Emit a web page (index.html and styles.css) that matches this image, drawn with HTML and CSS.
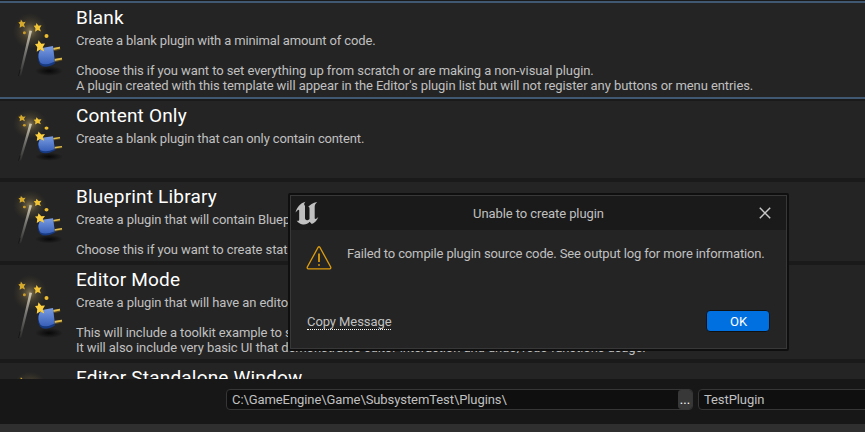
FILE: index.html
```html
<!DOCTYPE html>
<html lang="en">
<head>
<meta charset="utf-8">
<title>Plugins</title>
<link rel="stylesheet" href="styles.css">
</head>
<body>
<svg class="defs" aria-hidden="true">
  <defs>
    <radialGradient id="glow"><stop offset="0" stop-color="#d2b878" stop-opacity=".55"/><stop offset=".45" stop-color="#8a7748" stop-opacity=".28"/><stop offset="1" stop-color="#6a5a30" stop-opacity="0"/></radialGradient>
    <radialGradient id="shade"><stop offset="0" stop-color="#080808"/><stop offset="1" stop-color="#080808" stop-opacity="0"/></radialGradient>
    <linearGradient id="stick" x1="0" y1="0" x2="0" y2="1"><stop offset="0" stop-color="#d4ccb3"/><stop offset=".45" stop-color="#777672"/><stop offset="1" stop-color="#2c2c2c"/></linearGradient>
    <linearGradient id="body" x1="0" y1="0" x2="0" y2="1"><stop offset="0" stop-color="#7a9ce2"/><stop offset="1" stop-color="#3860b8"/></linearGradient>
    <path id="star" d="M-.3-1 .25-.38 1-.45.55.2.85.95.05.6-.65 1-.55.2-1-.35-.45-.4Z"/>
    <symbol id="plugin" viewBox="0 0 70 94" preserveAspectRatio="none">
      <ellipse cx="30" cy="28" rx="17" ry="18" fill="url(#glow)"/>
      <ellipse cx="49" cy="68" rx="14" ry="5" fill="url(#shade)"/>
      <path d="M29.5 27.5 32 28 21.2 72.3 18.8 73Z" fill="url(#stick)"/>
      <path d="M18.6 73 20.2 66.5" stroke="#111" stroke-width=".8"/>
      <use href="#star" transform="translate(22 20.7) scale(3.6 4.1)" fill="#d5a92c"/>
      <use href="#star" transform="translate(37.6 24.3) scale(3.9 4.4)" fill="#f0c235"/>
      <circle cx="24.4" cy="29.7" r="1.5" fill="#c99a27"/>
      <circle cx="46.5" cy="33" r="2" fill="#edbd30"/>
      <path d="M53 46.7 60 45.2M54 57.7 62 56" stroke="#5c4a1c" stroke-width="3"/>
      <path d="M53 46 60 44.7M54 57 62 55.7" stroke="#e0bd4e" stroke-width="1.8"/>
      <path d="M42 45.5 53 43.5 55 60.5Q45 66.5 40 61.5 36 54 39.5 48Z" fill="#17397f"/>
      <path d="M42 45 53 43 54.8 58.5Q46 63 40.5 60 37 54 39.5 48Z" fill="url(#body)"/>
      <use href="#star" transform="translate(40 43) scale(5 5.8)" fill="#fccf40"/>
    </symbol>
  </defs>
</svg>

<main class="templates">
  <section class="row selected">
    <svg class="icon"><use href="#plugin"/></svg>
    <div class="copy"><h2>Blank</h2><p><span class="tight">Create a blank plugin with a minimal amount of code.</span><br><br>Choose this if you want to set everything up from scratch or are making a non-visual plugin.<br>A plugin created with this template will appear in the Editor's plugin list but will not register any buttons or menu entries.</p></div>
  </section>
  <section class="row content-only">
    <svg class="icon"><use href="#plugin"/></svg>
    <div class="copy"><h2>Content Only</h2><p><span class="tight">Create a blank plugin that can only contain content.</span></p></div>
  </section>
  <section class="row library">
    <svg class="icon"><use href="#plugin"/></svg>
    <div class="copy"><h2>Blueprint Library</h2><p>Create a plugin that will contain Blueprint<br><br>Choose this if you want to create static</p></div>
  </section>
  <section class="row mode">
    <svg class="icon"><use href="#plugin"/></svg>
    <div class="copy"><h2>Editor Mode</h2><p>Create a plugin that will have an editor<br><br>This will include a toolkit example to s<br>It will also include very basic UI that demonstrates editor interaction and undo/redo functions usage.</p></div>
  </section>
  <section class="row standalone">
    <svg class="icon"><use href="#plugin"/></svg>
    <div class="copy"><h2>Editor Standalone Window</h2></div>
  </section>
</main>

<footer class="location">
  <div class="field path"><span>C:\GameEngine\Game\SubsystemTest\Plugins\</span><button class="browse">...</button></div>
  <div class="field name"><span>TestPlugin</span></div>
</footer>

<div class="dialog" role="dialog">
  <header class="titlebar">
    <svg class="logo" viewBox="0 0 24 24"><path fill="#c0c0c0" d="M.5 11.5C2 6.5 5 2.2 10.4.8 8.8 2.5 8.9 4 10 4.8V17.1C10 18.7 11.2 19.4 12.4 19.2 13.4 19 14.1 18.5 14.5 18V7.7C14.5 6.2 13.9 5.7 12.9 6.3 15 3.6 17.7 2 22.2 1 20.4 2.6 19.7 3.9 19.7 5.6V17C19.7 18.6 21.2 18.3 23.3 16.1 22 19.8 19.6 22.2 16.8 23L14.6 20.7C12.8 22.8 10.7 23.7 7.8 23.4 5 23.1 2.8 21.8 1.7 19.6 3.4 20.3 4.2 19.8 4.2 18.3V9.7C4.2 7.7 2.6 8.7.5 11.5Z"/></svg>
    <span class="caption">Unable to create plugin</span>
    <svg class="close" viewBox="0 0 12 12"><path d="M.8.8 11.2 11.2M11.2.8.8 11.2"/></svg>
  </header>
  <div class="message">
    <svg class="warning" viewBox="0 0 26 24"><path d="M12.2 1.2Q13 .4 13.8 1.2L24.8 21.2Q25 22.6 23.8 22.8H2.2Q1 22.6 1.2 21.2Z"/><path d="M13 7.5V16M13 18.2V19.8" stroke-width="1.8"/></svg>
    <span>Failed to compile plugin source code. See output log for more information.</span>
  </div>
  <div class="actions"><a class="copy-link">Copy Message</a><button class="ok">OK</button></div>
</div>
</body>
</html>
```
FILE: styles.css
```css
* { box-sizing: border-box; }
body {
  margin: 0;
  width: 865px;
  height: 432px;
  overflow: hidden;
  background: #2f2f2f;
  color: #c0c0c0;
  font: 13px/15px Roboto, sans-serif;
  letter-spacing: -.08px;
}
.defs { position: absolute; width: 0; height: 0; }

.templates {
  display: flex;
  flex-direction: column;
  gap: 4px;
  height: 379px;
  padding-top: 1px;
  overflow: hidden;
  background: #1a1a1a;
}
.row {
  display: flex;
  flex: none;
  gap: 6px;
  background: #242424;
  white-space: nowrap;
}
.selected {
  height: 98px;
  margin-bottom: -2px;
  border: solid #415872;
  border-width: 2px 0;
}
.content-only { height: 77px; }
.library { height: 79px; }
.mode { height: 94px; }
.standalone { height: 81px; }
.icon { width: 70px; height: 100%; flex: none; }
.copy { padding-top: 4px; }
h2 {
  margin: 0;
  color: #fff;
  font-size: 19px;
  font-weight: 400;
  line-height: 22px;
  letter-spacing: .19px;
}
p { margin: 4px 0 0; }
.tight { letter-spacing: -.14px; }

.location {
  display: flex;
  gap: 5px;
  height: 45px;
  padding: 10px 0 0 226px;
  background: #171717;
}
.field {
  display: flex;
  flex: none;
  align-items: center;
  justify-content: space-between;
  height: 21px;
  padding-left: 5px;
  border: 1px solid #363636;
  border-radius: 4px;
  background: #0f0f0f;
}
.path { width: 467px; }
.name { width: 180px; }
.browse {
  width: 14px;
  height: 19px;
  padding: 0;
  border: 0;
  border-radius: 3px;
  background: #383838;
  color: #fff;
  font: 13px/19px Roboto, sans-serif;
}

.dialog {
  position: absolute;
  left: 288px;
  top: 193px;
  width: 501px;
  height: 158px;
  border: 2px solid #0f0f0f;
  border-radius: 2px;
  background: #242424;
  box-shadow: inset 0 0 0 1px #383838;
  padding: 1px;
}
.titlebar {
  display: flex;
  align-items: center;
  justify-content: space-between;
  height: 34px;
  padding: 0 15px 0 4px;
  background: #1a1a1a;
}
.logo { width: 24px; height: 24px; margin-bottom: 1px; }
.caption { padding-right: 1px; }
.close { width: 12px; height: 12px; stroke: #c8c8c8; stroke-width: 1.5; margin-bottom: 1px; }
.message { display: flex; gap: 15px; padding: 16px 0 0 15px; }
.message span { white-space: nowrap; letter-spacing: -.14px; }
.warning { width: 26px; height: 24px; fill: none; stroke: #dc9c0e; stroke-width: 1.3; }
.actions {
  display: flex;
  align-items: flex-start;
  justify-content: space-between;
  padding: 40px 16px 0 16px;
}
.copy-link { margin-top: 4px; border-bottom: 1px dotted #fff; }
.ok {
  width: 64px;
  height: 22px;
  padding: 1px 0 0 1px;
  border: 1px solid #111;
  border-radius: 4px;
  background: #0070e0;
  color: #fff;
  font: 13px/20px Roboto, sans-serif;
}
```
